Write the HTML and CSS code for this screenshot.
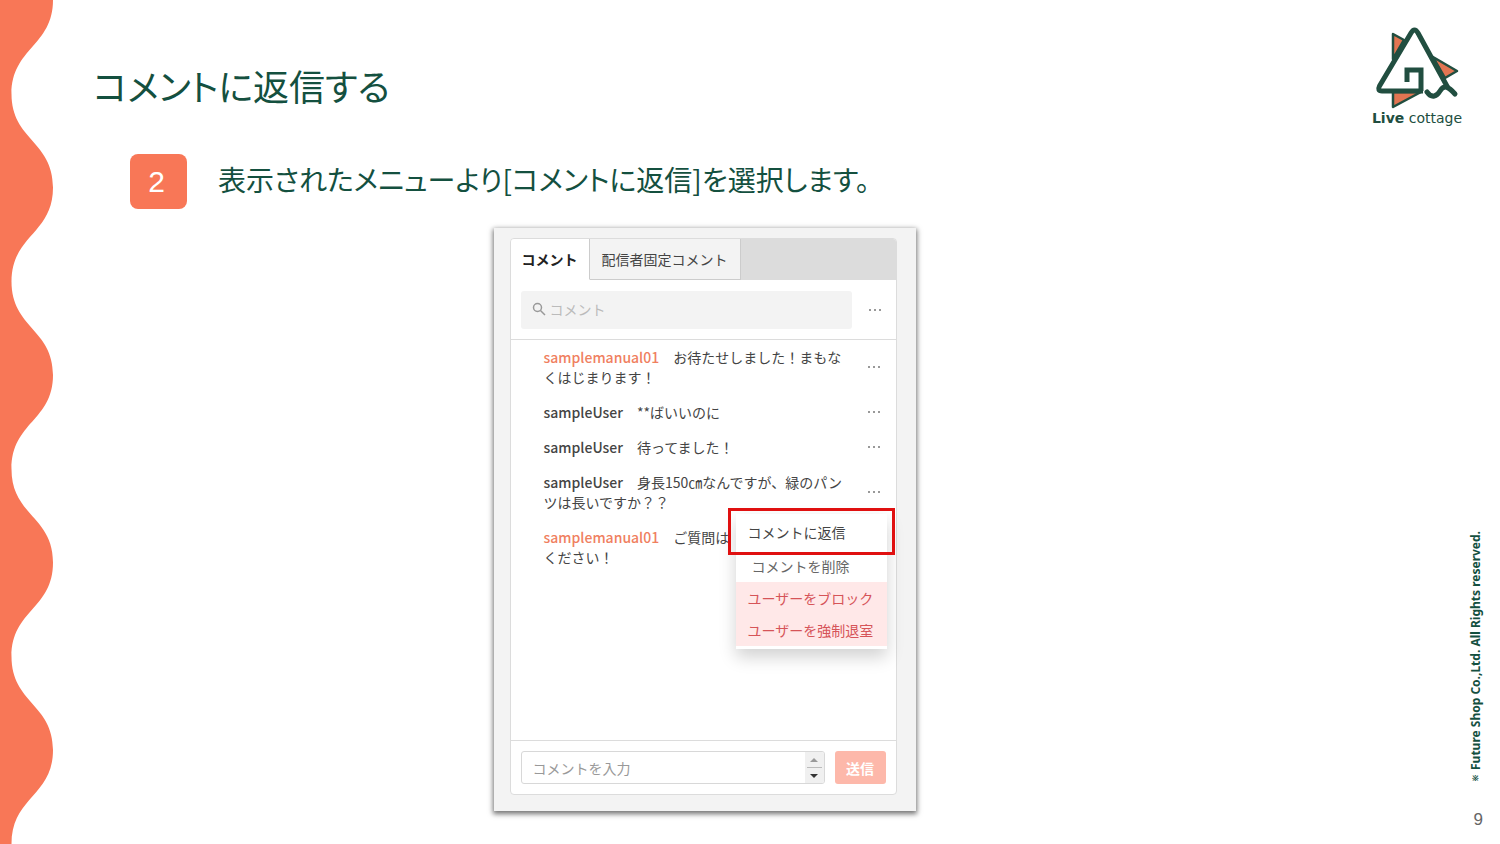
FILE: index.html
```html
<!DOCTYPE html>
<html lang="ja">
<head>
<meta charset="utf-8">
<meta name="viewport" content="width=device-width, initial-scale=1">
<title>コメントに返信する</title>
<link rel="stylesheet" href="styles.css">
</head>
<body>
<div class="slide">
  <svg class="wave" viewBox="0 0 53 844" preserveAspectRatio="none" aria-hidden="true">
    <path d="M0 0H53C53 46 11.500 48 11.500 94S53 141 53 187.500S11.500 235 11.500 281.500S53 329 53 375S11.500 422 11.500 469S53 516 53 562.500S11.500 610 11.500 656.500S53 704 53 750S11.500 797 11.500 844H0Z"/>
  </svg>

  <main class="content">
    <h1 class="title">コメントに返信する</h1>
    <div class="step">
      <span class="step-number">2</span>
      <p class="step-text">表示されたメニューより[コメントに返信]を選択します。</p>
    </div>

    <section class="card">
      <div class="panel">
        <div class="tabs" role="tablist">
          <button class="tab tab-active" role="tab" aria-selected="true">コメント</button>
          <button class="tab" role="tab" aria-selected="false">配信者固定コメント</button>
        </div>
        <div class="search-row">
          <label class="search">
            <svg class="search-icon" viewBox="0 0 14 14" aria-hidden="true"><circle cx="5.500" cy="5.500" r="4"/><path d="M8.500 8.500L13 13"/></svg>
            <input class="search-input" type="text" placeholder="コメント" aria-label="コメント">
          </label>
          <button class="more" aria-label="メニュー"><i></i><i></i><i></i></button>
        </div>
        <ul class="comments">
          <li class="comment">
            <p class="comment-text"><span class="user host">samplemanual01</span>　お待たせしました！まもな<br>くはじまります！</p>
            <button class="more" aria-label="メニュー"><i></i><i></i><i></i></button>
          </li>
          <li class="comment">
            <p class="comment-text"><span class="user">sampleUser</span>　**ばいいのに</p>
            <button class="more" aria-label="メニュー"><i></i><i></i><i></i></button>
          </li>
          <li class="comment">
            <p class="comment-text"><span class="user">sampleUser</span>　待ってました！</p>
            <button class="more" aria-label="メニュー"><i></i><i></i><i></i></button>
          </li>
          <li class="comment">
            <p class="comment-text"><span class="user">sampleUser</span>　身長150㎝なんですが、緑のパン<br>ツは長いですか？？</p>
            <button class="more" aria-label="メニュー"><i></i><i></i><i></i></button>
            <div class="menu">
              <button class="menu-item menu-reply">コメントに返信</button>
              <button class="menu-item menu-delete">コメントを削除</button>
              <button class="menu-item menu-danger">ユーザーをブロック</button>
              <button class="menu-item menu-danger">ユーザーを強制退室</button>
            </div>
          </li>
          <li class="comment">
            <p class="comment-text"><span class="user host">samplemanual01</span>　ご質問は<br>ください！</p>
          </li>
        </ul>
        <form class="composer">
          <div class="field">
            <input class="field-input" type="text" placeholder="コメントを入力" aria-label="コメントを入力">
            <div class="stepper">
              <button class="stepper-button" type="button" aria-label="上へ"><svg viewBox="0 0 8 4"><path fill="#999" d="M4 0L8 4H0Z"/></svg></button>
              <button class="stepper-button" type="button" aria-label="下へ"><svg viewBox="0 0 8 4"><path fill="#333" d="M0 0H8L4 4Z"/></svg></button>
            </div>
          </div>
          <button class="send" type="button">送信</button>
        </form>
      </div>
    </section>
  </main>

  <aside class="side">
    <div class="brand">
      <svg class="brand-mark" viewBox="0 0 84 84" aria-hidden="true">
        <g fill="#e27552" stroke="#214e40" stroke-width="2.500" stroke-linejoin="round">
          <path d="M18 8L29 14L18 33Z"/>
          <path d="M58 31L82 45L70 52Z"/>
          <path d="M18 66H46L18 81Z"/>
        </g>
        <path d="M47.500 64H7Q2 64 4.500 59L35 7Q38.500 1 42 7L74 61" fill="#fff" stroke="none"/>
        <g fill="none" stroke="#214e40" stroke-width="5" stroke-linejoin="round" stroke-linecap="round">
          <path d="M48 65H7Q2 65 4.500 60L36 7Q39.500 1 43 7L73 62" stroke-linecap="butt"/>
          <path d="M32 56V44H46V65" stroke-linecap="butt" stroke-linejoin="miter"/>
          <path d="M52 66C57 73 62 70 65 65C69 58 74 61 80 68"/>
        </g>
      </svg>
      <p class="brand-name"><b>Live</b> cottage</p>
    </div>
    <div class="legal">
      <p class="copyright"><span class="mark">※</span> Future Shop Co.,Ltd. All Rights reserved.</p>
      <span class="page-number">9</span>
    </div>
  </aside>
</div>
</body>
</html>
```
FILE: styles.css
```css
* { box-sizing: border-box; }

body {
  margin: 0;
  background: #fff;
  color: #444;
  font-family: "Noto Sans CJK JP", sans-serif;
}

h1, p, ul { margin: 0; padding: 0; }

button, input { font: inherit; color: inherit; }

button { border: 0; background: none; padding: 0; cursor: pointer; }

.slide { display: flex; min-height: 100vh; }

.wave { flex: none; align-self: stretch; width: 53px; fill: #f87757; }

.content {
  flex: 1;
  display: flex;
  flex-direction: column;
  padding: 58px 0 33px;
}

.title {
  padding-left: 40px;
  color: #14503f;
  font-size: 36px;
  font-weight: 400;
  line-height: 54px;
  font-feature-settings: "palt";
}

.step {
  display: flex;
  gap: 31px;
  padding: 42px 0 0 77px;
}

.step-number {
  width: 57px;
  height: 55px;
  padding-right: 4px;
  border-radius: 8px;
  background: #f87757;
  color: #fff;
  font: 30px/56px "Liberation Sans", Arial, sans-serif;
  text-align: center;
}

.step-text {
  color: #14503f;
  font-size: 28px;
  line-height: 50px;
  font-feature-settings: "palt";
}

.card {
  display: flex;
  align-self: center;
  flex: 1;
  width: 422px;
  margin: 19px 2px 0 0;
  padding: 10px 19px 16px 16px;
  background: #f3f3f3;
  box-shadow: 0 2px 5px 1px rgba(0, 0, 0, .55);
}

.panel {
  flex: 1;
  display: flex;
  flex-direction: column;
  border: 1px solid #dcdcdc;
  border-radius: 4px;
  background: #fff;
  font-size: 14px;
}

.tabs {
  display: flex;
  height: 41px;
  border-radius: 3px 3px 0 0;
  background: #dcdcdc;
}

.tab {
  padding: 0 12px;
  border: 1px solid #ccc;
  border-width: 0 1px 1px 0;
  background: #f3f3f3;
}

.tab-active {
  padding: 0 11px;
  border-bottom-color: #fff;
  border-radius: 3px 0 0 0;
  background: #fff;
  color: #222;
  font-weight: 700;
}

.search-row {
  display: flex;
  align-items: center;
  justify-content: space-between;
  padding: 11px 15px 10px 10px;
  border-bottom: 1px solid #dcdcdc;
}

.search {
  display: flex;
  align-items: center;
  gap: 4px;
  width: 331px;
  height: 38px;
  padding: 0 11px 2px;
  border-radius: 3px;
  background: #f3f3f3;
}

.search-icon {
  width: 14px;
  height: 14px;
  fill: none;
  stroke: #999;
  stroke-width: 1.5;
}

.search-input, .field-input {
  flex: 1;
  min-width: 0;
  padding: 0;
  border: 0;
  background: none;
  outline: 0;
}

.search-input::placeholder { color: #bbb; opacity: 1; }
.field-input::placeholder { color: #999; opacity: 1; }

.more { display: flex; gap: 3px; padding: 4px 0; }

.more i { width: 2px; height: 2px; background: #999; }

.comments {
  flex: 1;
  display: flex;
  flex-direction: column;
  gap: 15px;
  padding: 7px 16px 7px 33px;
  list-style: none;
}

.comment {
  position: relative;
  display: flex;
  align-items: center;
  justify-content: space-between;
  line-height: 20px;
}

.comment-text { white-space: nowrap; }

.user { font-weight: 500; }

.host { color: #f0805f; }

.menu {
  position: absolute;
  z-index: 1;
  top: 42px;
  right: -7px;
  display: flex;
  flex-direction: column;
  width: 151px;
  padding-bottom: 3px;
  background: #fff;
  box-shadow: 0 8px 16px rgba(0, 0, 0, .18);
}

.menu-item {
  height: 32px;
  padding-left: 12px;
  text-align: left;
  line-height: 32px;
}

.menu-reply {
  height: 47px;
  margin: -6px -8px 0;
  padding-left: 17px;
  border: 3px solid #e01010;
  line-height: 42px;
}

.menu-delete { height: 27px; padding: 0 0 6px 16px; line-height: 20px; color: #666; }

.menu-danger { background: #ffe8e8; color: #d65458; }

.composer {
  display: flex;
  gap: 10px;
  padding: 10px;
  border-top: 1px solid #dcdcdc;
}

.field {
  flex: 1;
  display: flex;
  height: 33px;
  padding-left: 11px;
  border: 1px solid #d8d8d8;
  border-radius: 3px;
  overflow: hidden;
}

.stepper {
  display: flex;
  flex-direction: column;
  width: 19px;
  padding: 0 2px;
  background: #f0f0f0;
}

.stepper-button {
  flex: 1;
  display: flex;
  align-items: center;
  justify-content: center;
}

.stepper-button + .stepper-button { border-top: 1px solid #bbb; }

.stepper-button svg { width: 8px; height: 4px; }

.send {
  width: 51px;
  border-radius: 3px;
  background: #fdb8aa;
  color: #fff;
  font-weight: 700;
}

.side {
  display: flex;
  flex-direction: column;
  justify-content: space-between;
  width: 142px;
  padding: 26px 15px 12px 10px;
}

.brand {
  display: flex;
  flex-direction: column;
  align-items: center;
  width: 98px;
}

.brand-mark { width: 84px; height: 84px; }

.brand-name {
  color: #214e40;
  font: 14px/16px "DejaVu Sans", sans-serif;
  white-space: nowrap;
}

.legal {
  display: flex;
  flex-direction: column;
  align-items: flex-end;
  gap: 24px;
}

.copyright {
  padding-left: 2px;
  color: #14503f;
  font: 700 12px/14px "Noto Sans", "Noto Sans CJK JP", sans-serif;
  writing-mode: vertical-rl;
  transform: rotate(180deg);
}

.mark { font-size: 8px; }

.page-number {
  padding-right: 2px;
  color: #666;
  font: 17px/24px "Liberation Sans", Arial, sans-serif;
}
```
